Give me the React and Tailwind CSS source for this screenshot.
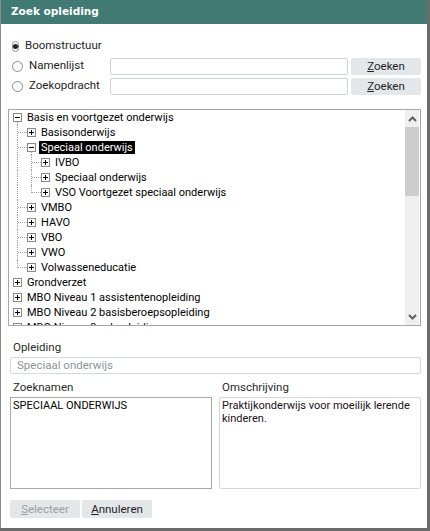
import React from 'react'

const tree = [
  { label: 'Basis en voortgezet onderwijs', level: 0, open: true, guides: [] },
  { label: 'Basisonderwijs', level: 1, guides: ['mid'] },
  { label: 'Speciaal onderwijs', level: 1, open: true, selected: true, guides: ['mid'] },
  { label: 'IVBO', level: 2, guides: ['v', 'mid'] },
  { label: 'Speciaal onderwijs', level: 2, guides: ['v', 'mid'] },
  { label: 'VSO Voortgezet speciaal onderwijs', level: 2, guides: ['v', 'last'] },
  { label: 'VMBO', level: 1, guides: ['mid'] },
  { label: 'HAVO', level: 1, guides: ['mid'] },
  { label: 'VBO', level: 1, guides: ['mid'] },
  { label: 'VWO', level: 1, guides: ['mid'] },
  { label: 'Volwasseneducatie', level: 1, guides: ['last'] },
  { label: 'Grondverzet', level: 0, guides: [] },
  { label: 'MBO Niveau 1 assistentenopleiding', level: 0, guides: [] },
  { label: 'MBO Niveau 2 basisberoepsopleiding', level: 0, guides: [] },
  { label: 'MBO Niveau 3 vakopleiding', level: 0, guides: [] },
]

function Expander({ open }) {
  return (
    <svg width="9" height="9" className="shrink-0 block">
      <rect x="0.5" y="0.5" width="8" height="8" fill="#fff" stroke="#8a8a8a" />
      <path d="M2 4.5h5" stroke="#000" />
      {!open && <path d="M4.5 2v5" stroke="#000" />}
    </svg>
  )
}

function Guide({ type }) {
  // one 14px column of the tree lines
  return (
    <div className="relative w-[14px] h-full shrink-0">
      {type === 'v' && (
        <div className="absolute left-[4px] top-0 h-full border-l border-dotted border-[#a0a0a0]" />
      )}
      {(type === 'mid' || type === 'last') && (
        <>
          <div
            className={`absolute left-[4px] top-0 border-l border-dotted border-[#a0a0a0] ${
              type === 'mid' ? 'h-full' : 'h-[8px]'
            }`}
          />
          <div className="absolute left-[5px] top-[7px] w-[9px] border-t border-dotted border-[#a0a0a0]" />
        </>
      )}
    </div>
  )
}

function TreeRow({ node }) {
  return (
    <div className="flex items-center h-[15px] pl-[4px]">
      {node.guides.map((g, i) => (
        <Guide key={i} type={g} />
      ))}
      <div className="relative h-full flex items-center">
        <Expander open={node.open} />
        {node.open && (
          <div className="absolute left-[4px] top-[12px] h-[3px] border-l border-dotted border-[#a0a0a0]" />
        )}
      </div>
      <span
        className={`ml-[3px] px-[2px] h-[13px] leading-[13px] whitespace-nowrap ${
          node.selected ? 'bg-black text-white' : 'text-black'
        }`}
      >
        {node.label}
      </span>
    </div>
  )
}

function Radio({ checked, label }) {
  return (
    <div className="flex items-center w-[99px] shrink-0 pl-[11px]">
      <span className="w-[11px] h-[11px] rounded-full border border-[#8c8c8c] bg-white flex items-center justify-center">
        {checked && <span className="w-[5px] h-[5px] rounded-full bg-[#222]" />}
      </span>
      <span className="ml-[6px] text-[#1e1e1e]">{label}</span>
    </div>
  )
}

function Chevron({ up }) {
  return (
    <svg width="9" height="6" className="block">
      <path
        d={up ? 'M1 5L4.5 1.5L8 5' : 'M1 1L4.5 4.5L8 1'}
        fill="none"
        stroke="#606060"
        strokeWidth="2"
      />
    </svg>
  )
}

export default function App() {
  return (
    <div className="w-[430px] h-[531px] bg-[#6b6b6b] font-['Roboto',sans-serif] text-[11.5px]">
      <div className="w-[427px] h-[528px] bg-white border-l border-[#8a8a8a] flex flex-col">
        <div className="h-[24px] bg-[#407a72] flex items-center pl-[10px] text-white font-bold text-[10.5px] font-['DejaVu_Sans',sans-serif]">
          Zoek opleiding
        </div>

        <div className="pt-[12px] flex flex-col">
          <div className="flex items-center h-[20px]">
            <Radio checked label="Boomstructuur" />
          </div>
          <div className="flex items-center h-[20px]">
            <Radio label="Namenlijst" />
            <div className="w-[238px] h-[17px] border border-[#cdd3d8] rounded-[2px] ml-[10px]" />
            <button className="ml-[3px] w-[70px] h-[17px] bg-[#e3e7ea] rounded-[2px] text-[#1e1e1e] leading-[17px]">
              <span className="underline">Z</span>oeken
            </button>
          </div>
          <div className="flex items-center h-[20px]">
            <Radio label="Zoekopdracht" />
            <div className="w-[238px] h-[17px] border border-[#cdd3d8] rounded-[2px] ml-[10px]" />
            <button className="ml-[3px] w-[70px] h-[17px] bg-[#e3e7ea] rounded-[2px] text-[#1e1e1e] leading-[17px]">
              <span className="underline">Z</span>oeken
            </button>
          </div>
        </div>

        <div className="mt-[13px] ml-[7px] w-[413px] h-[217px] border border-[#a6a6a6] flex">
          <div className="flex-1 overflow-hidden text-[11px]">
            {tree.map((node, i) => (
              <TreeRow key={i} node={node} />
            ))}
          </div>
          <div className="w-[14px] mr-[1px] bg-[#efefef] flex flex-col">
            <div className="h-[17px] flex items-center justify-center">
              <Chevron up />
            </div>
            <div className="h-[69px] bg-[#cdcdcd]" />
            <div className="flex-1" />
            <div className="h-[17px] flex items-center justify-center">
              <Chevron />
            </div>
          </div>
        </div>

        <div className="mt-[13px] pl-[12px] h-[16px] leading-[16px] text-[#2a2a2a]">Opleiding</div>
        <div className="mt-[2px] ml-[9px] w-[411px] h-[17px] border border-[#d3d8dd] rounded-[2px] pl-[6px] leading-[15px] text-[#8e949a]">
          Speciaal onderwijs
        </div>

        <div className="mt-[5px] ml-[9px] w-[411px] flex gap-[7px]">
          <div className="flex-1 flex flex-col">
            <div className="h-[16px] leading-[16px] pl-[3px] text-[#2a2a2a]">Zoeknamen</div>
            <div className="mt-[2px] h-[92px] border border-[#a9a9a9] px-[2px] pt-[1px] text-[11px] text-black leading-[13px]">
              SPECIAAL ONDERWIJS
            </div>
          </div>
          <div className="flex-1 flex flex-col">
            <div className="h-[16px] leading-[16px] pl-[3px] text-[#2a2a2a]">Omschrijving</div>
            <div className="mt-[2px] h-[92px] border border-[#cfd6dc] rounded-[2px] pl-[2px] pr-[1px] pt-[1px] text-[11px] text-[#1a1020] leading-[13px]">
              Praktijkonderwijs voor moeilijk lerende kinderen.
            </div>
          </div>
        </div>

        <div className="mt-[11px] ml-[9px] flex gap-[2px]">
          <button className="w-[70px] h-[18px] bg-[#e3e7ea] rounded-[2px] text-[#9aa0a6] leading-[18px]">
            <span className="underline">S</span>electeer
          </button>
          <button className="w-[70px] h-[18px] bg-[#e3e7ea] rounded-[2px] text-[#1e1e1e] leading-[18px]">
            <span className="underline">A</span>nnuleren
          </button>
        </div>
      </div>
    </div>
  )
}
